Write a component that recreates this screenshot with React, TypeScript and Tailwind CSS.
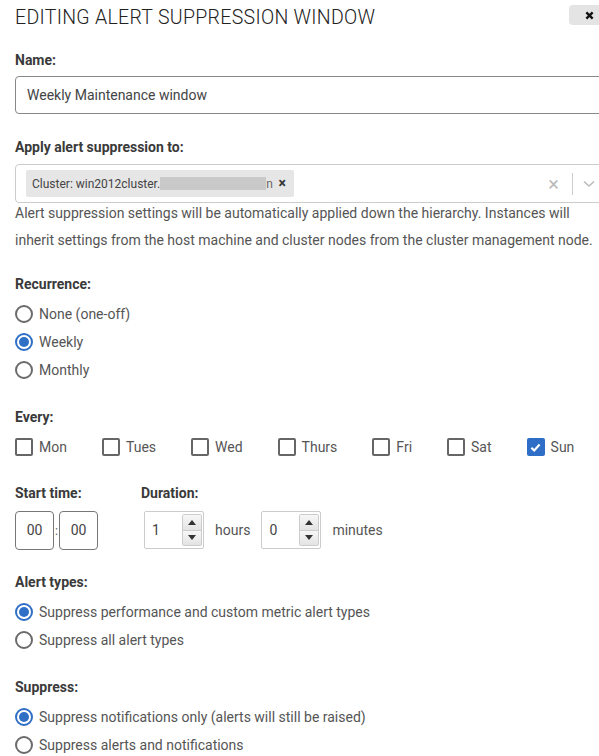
import React from 'react';

function FieldLabel({ children }: { children: React.ReactNode }) {
  return <div className="text-[14px] leading-[20px] font-bold text-[#3a3a3a]">{children}</div>;
}

function Radio({ label, checked }: { label: string; checked?: boolean }) {
  return (
    <div className="flex items-center h-[28px]">
      <span
        className={
          checked
            ? 'flex items-center justify-center size-[18px] rounded-full border-2 border-[#2f6fc6]'
            : 'flex items-center justify-center size-[18px] rounded-full border-2 border-[#6b6b6b]'
        }
      >
        {checked && <span className="size-[10px] rounded-full bg-[#2f6fc6]" />}
      </span>
      <span className="ml-[6px] text-[14px] text-[#555]">{label}</span>
    </div>
  );
}

function Checkbox({ label, checked }: { label: string; checked?: boolean }) {
  return (
    <div className="flex items-center h-[28px]">
      {checked ? (
        <span className="flex items-center justify-center size-[18px] rounded-[2px] bg-[#2f6ec6]">
          <svg viewBox="0 0 12 12" className="size-[11px]">
            <path d="M1.5 6.2 L4.6 9.2 L10.5 2.8" fill="none" stroke="white" strokeWidth="2.4" />
          </svg>
        </span>
      ) : (
        <span className="size-[18px] rounded-[2px] border-2 border-[#666]" />
      )}
      <span className="ml-[6px] text-[14px] text-[#555]">{label}</span>
    </div>
  );
}

function NumberBox({ value }: { value: string }) {
  return (
    <div className="relative w-[60px] h-[38px] border border-[#ccc] rounded-[2px] flex items-center">
      <span className="pl-[7px] text-[14px] text-[#444]">{value}</span>
      <div className="absolute right-[1px] top-[2px] bottom-[2px] w-[20px] flex flex-col border border-[#ccc] rounded-[2px]">
        <div className="flex-1 flex items-center justify-center bg-gradient-to-b from-[#f7f7f7] to-[#e3e3e3] border-b border-[#ccc]">
          <svg viewBox="0 0 8 5" className="w-[8px] h-[5px]">
            <path d="M0 5 L4 0 L8 5 Z" fill="#333" />
          </svg>
        </div>
        <div className="flex-1 flex items-center justify-center bg-gradient-to-b from-[#f7f7f7] to-[#e3e3e3]">
          <svg viewBox="0 0 8 5" className="w-[8px] h-[5px]">
            <path d="M0 0 L4 5 L8 0 Z" fill="#333" />
          </svg>
        </div>
      </div>
    </div>
  );
}

export default function App() {
  const days = ['Mon', 'Tues', 'Wed', 'Thurs', 'Fri', 'Sat', 'Sun'];
  return (
    <div
      className="w-full h-[756px] overflow-hidden bg-white"
      style={{ fontFamily: 'Roboto, "Noto Sans", sans-serif' }}
    >
      <div className="flex items-start">
        <h1 className="pl-[15px] pt-[5px] text-[19.5px] leading-[26px] font-light text-[#222] tracking-[0.3px]">
          EDITING ALERT SUPPRESSION WINDOW
        </h1>
        <button className="ml-auto mt-[5px] -mr-[12px] w-[42px] h-[20px] rounded-[4px] bg-[#e4e4e4] flex items-center pl-[16px]">
          <svg viewBox="0 0 10 10" className="size-[9px]">
            <path d="M1.5 1.5 L8.5 8.5 M8.5 1.5 L1.5 8.5" stroke="#111" strokeWidth="2.6" />
          </svg>
        </button>
      </div>

      <div className="pl-[15px] w-[640px]">
        <div className="mt-[19px]">
          <FieldLabel>Name:</FieldLabel>
          <div className="mt-[6px] h-[38px] border border-[#888] rounded-[4px] flex items-center pl-[11px] text-[14px] text-[#444]">
            Weekly Maintenance window
          </div>
        </div>

        <div className="mt-[23px]">
          <FieldLabel>Apply alert suppression to:</FieldLabel>
          <div className="mt-[7px] w-[592px] h-[39px] border border-[#ccc] rounded-[4px] flex items-center pl-[10px]">
            <div className="h-[27px] w-[268px] bg-[#e6e6e6] rounded-[2px] flex items-center pl-[6px] text-[12px] text-[#444]">
              <span>Cluster: win2012cluster.f</span>
              <span className="w-[106px] h-[13px] bg-[#c9c9c9] -ml-[4px]" />
              <span className="text-[#666]">n</span>
              <span className="ml-auto mr-[8px] text-[14px] font-bold text-[#333]">×</span>
            </div>
            <span className="ml-auto text-[20px] text-[#bbb] leading-none">×</span>
            <span className="ml-[13px] w-px h-[22px] bg-[#ccc]" />
            <svg viewBox="0 0 12 8" className="ml-[10px] mr-[11px] w-[12px] h-[8px]">
              <path d="M1 1.5 L6 6 L11 1.5" fill="none" stroke="#bbb" strokeWidth="1.6" />
            </svg>
          </div>
          <p className="w-[590px] mt-[-3px] text-[14px] leading-[27px] text-[#555]">
            Alert suppression settings will be automatically applied down the hierarchy. Instances will
            inherit settings from the host machine and cluster nodes from the cluster management node.
          </p>
        </div>

        <div className="mt-[20px]">
          <FieldLabel>Recurrence:</FieldLabel>
          <div className="mt-[6px]">
            <Radio label="None (one-off)" />
            <Radio label="Weekly" checked />
            <Radio label="Monthly" />
          </div>
        </div>

        <div className="mt-[23px]">
          <FieldLabel>Every:</FieldLabel>
          <div className="mt-[6px] flex gap-[35px]">
            {days.map((d) => (
              <Checkbox key={d} label={d} checked={d === 'Sun'} />
            ))}
          </div>
        </div>

        <div className="mt-[22px] flex">
          <div className="w-[126px]">
            <FieldLabel>Start time:</FieldLabel>
            <div className="mt-[8px] flex items-center">
              <div className="w-[39px] h-[39px] border border-[#777] rounded-[4px] flex items-center justify-center text-[14px] text-[#444]">
                00
              </div>
              <span className="w-[5px] text-center text-[12px] text-[#555]">:</span>
              <div className="w-[39px] h-[39px] border border-[#777] rounded-[4px] flex items-center justify-center text-[14px] text-[#444]">
                00
              </div>
            </div>
          </div>
          <div>
            <FieldLabel>Duration:</FieldLabel>
            <div className="mt-[8px] ml-[3px] flex items-center">
              <NumberBox value="1" />
              <span className="ml-[11px] text-[14px] text-[#555]">hours</span>
              <div className="ml-[11px]">
                <NumberBox value="0" />
              </div>
              <span className="ml-[11px] text-[14px] text-[#555]">minutes</span>
            </div>
          </div>
        </div>

        <div className="mt-[22px]">
          <FieldLabel>Alert types:</FieldLabel>
          <div className="mt-[6px]">
            <Radio label="Suppress performance and custom metric alert types" checked />
            <Radio label="Suppress all alert types" />
          </div>
        </div>

        <div className="mt-[23px]">
          <FieldLabel>Suppress:</FieldLabel>
          <div className="mt-[6px]">
            <Radio label="Suppress notifications only (alerts will still be raised)" checked />
            <Radio label="Suppress alerts and notifications" />
          </div>
        </div>
      </div>
    </div>
  );
}
